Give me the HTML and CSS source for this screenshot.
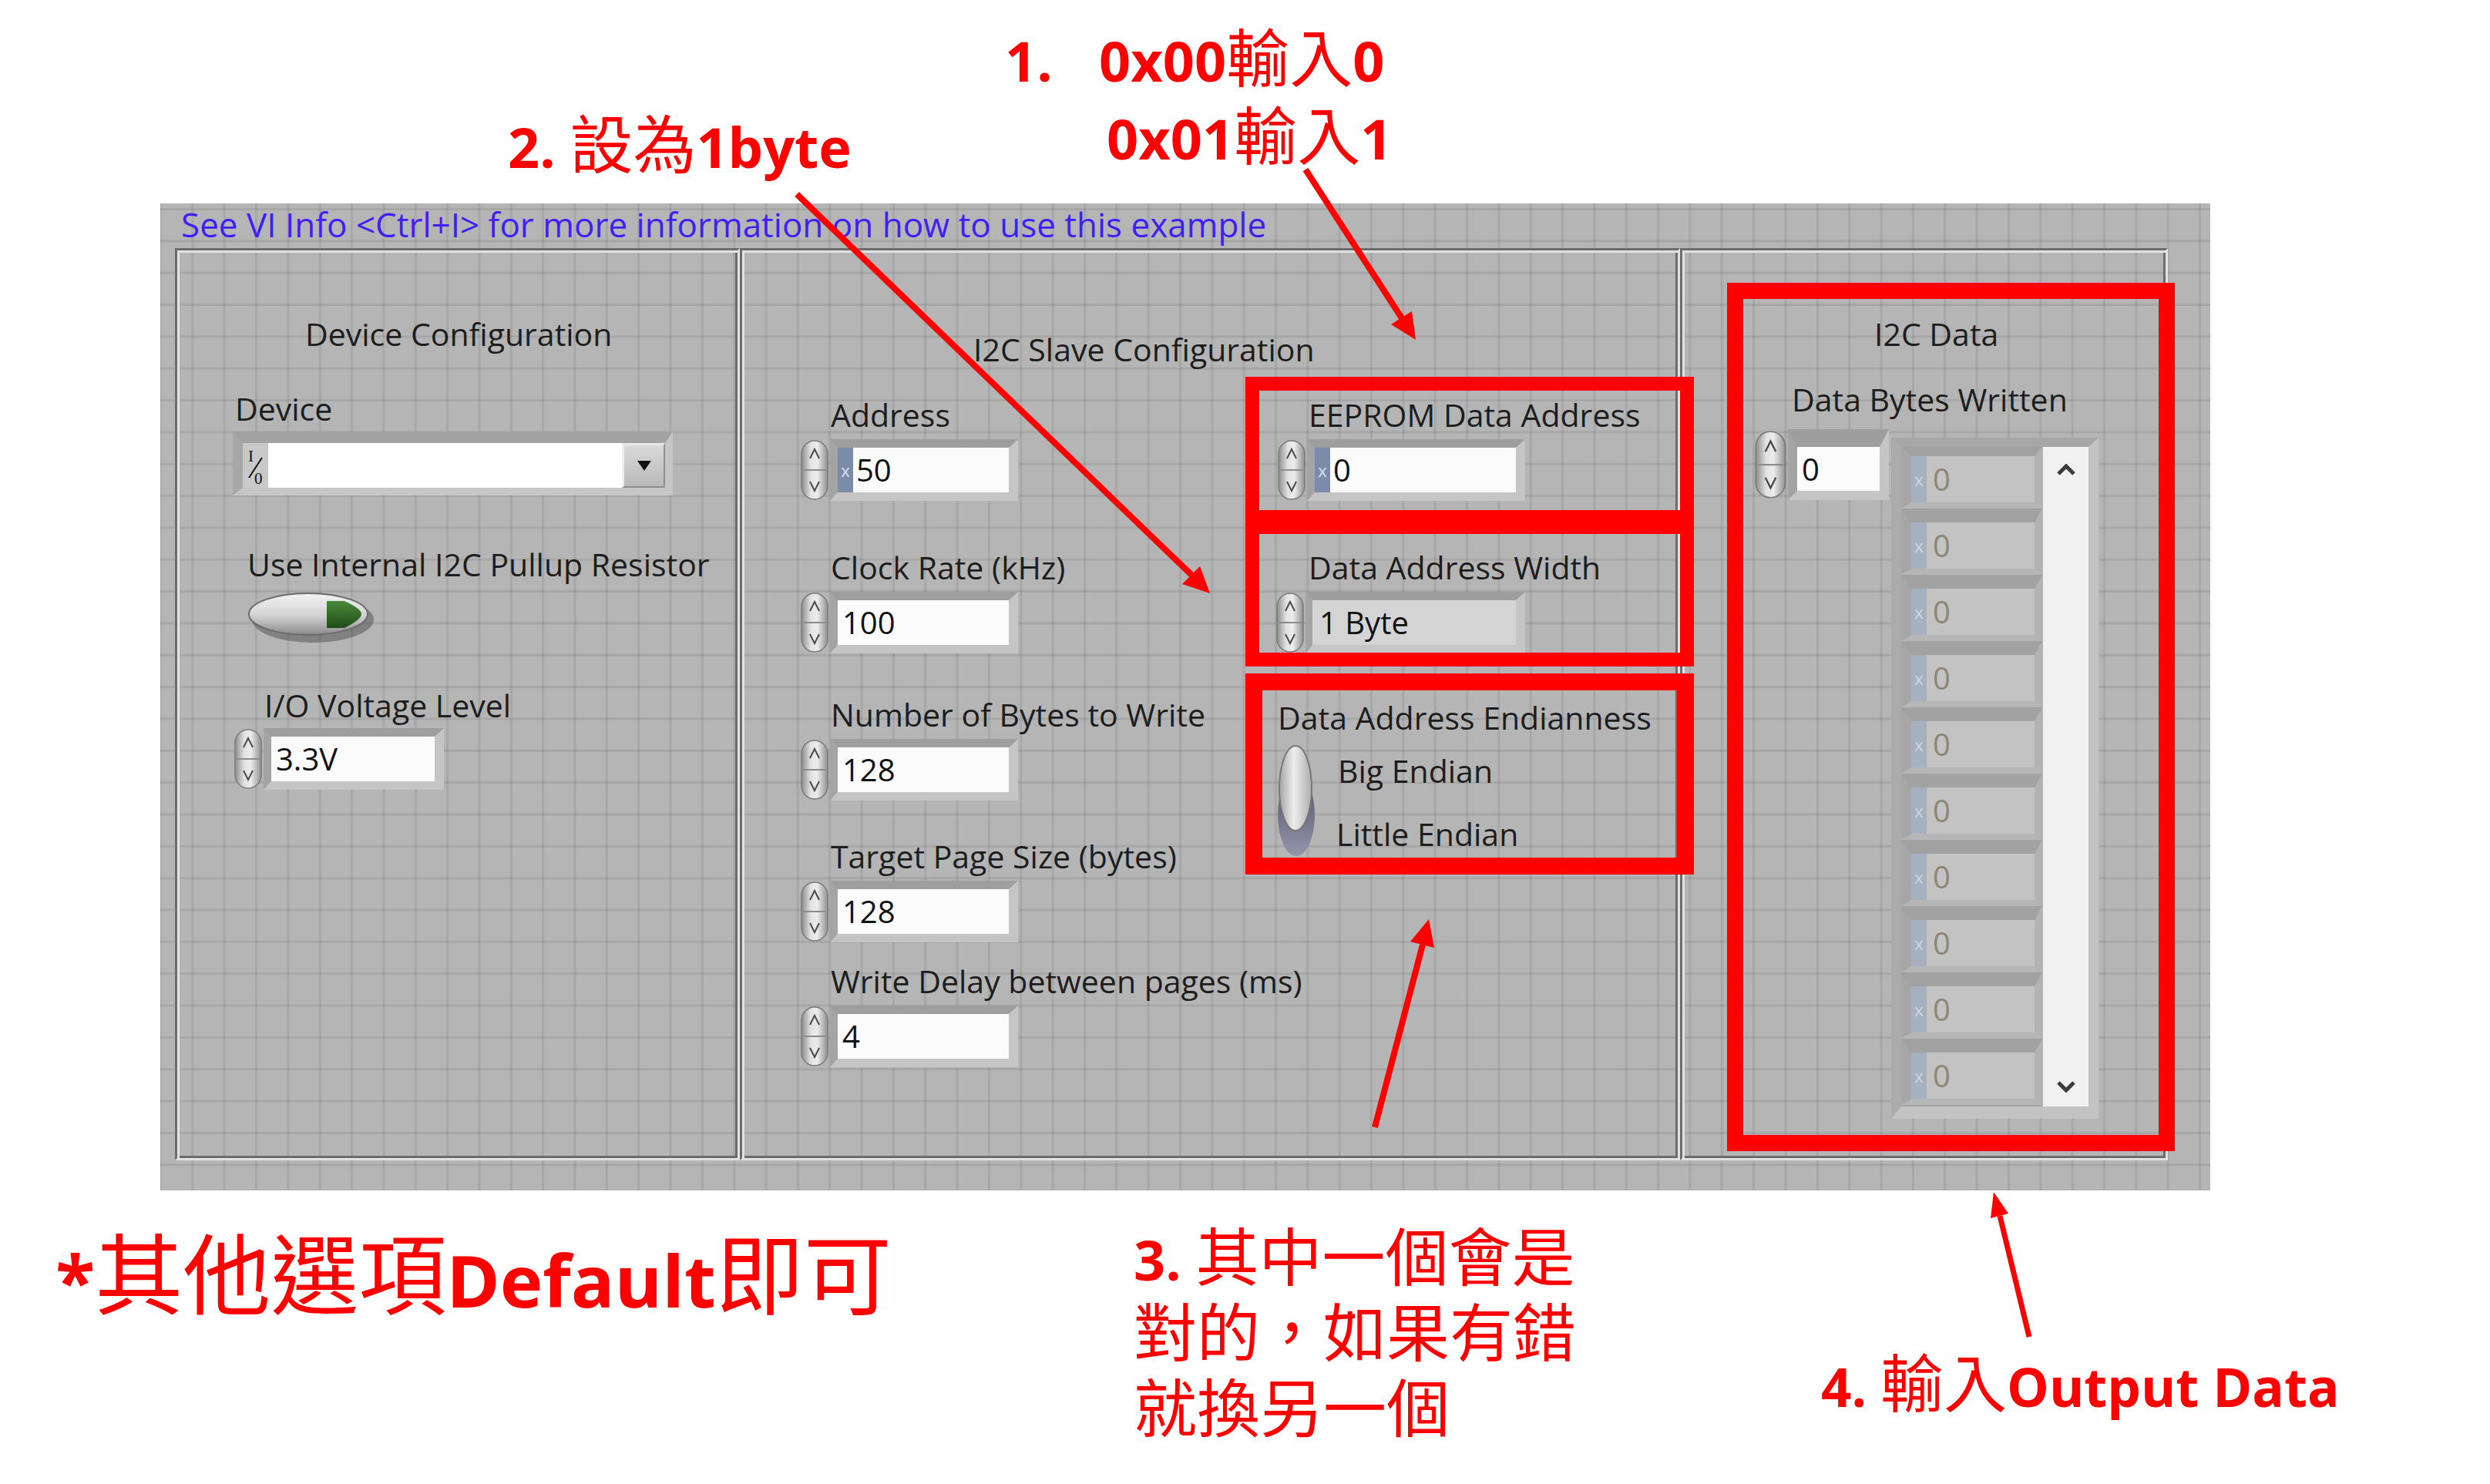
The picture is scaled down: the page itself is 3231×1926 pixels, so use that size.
FILE: index.html
```html
<!DOCTYPE html>
<html lang="zh-Hant">
<head>
<meta charset="utf-8">
<title>I2C EEPROM Write – 設定說明</title>
<link rel="stylesheet" href="styles.css">
</head>
<body>
<svg class="defs" width="0" height="0" aria-hidden="true">
  <defs>
    <linearGradient id="gSpin" x1="0" y1="0" x2="1" y2="0">
      <stop offset="0" stop-color="#8c8c8c"/>
      <stop offset=".35" stop-color="#e2e2e2"/>
      <stop offset=".6" stop-color="#ececec"/>
      <stop offset="1" stop-color="#909090"/>
    </linearGradient>
    <linearGradient id="gTog" x1="0" y1="0" x2="0" y2="1">
      <stop offset="0" stop-color="#f4f4f4"/>
      <stop offset=".55" stop-color="#d0d0d0"/>
      <stop offset="1" stop-color="#8a8a8a"/>
    </linearGradient>
    <linearGradient id="gVert" x1="0" y1="0" x2="1" y2="0">
      <stop offset="0" stop-color="#a4a4a4"/>
      <stop offset=".45" stop-color="#eeeeee"/>
      <stop offset="1" stop-color="#acacac"/>
    </linearGradient>
    <linearGradient id="gShade" x1="0" y1="0" x2="0" y2="1">
      <stop offset="0" stop-color="#4f4f66"/>
      <stop offset="1" stop-color="#9494aa"/>
    </linearGradient>
    <linearGradient id="gLed" x1="0" y1="0" x2="0" y2="1">
      <stop offset="0" stop-color="#4a8a3a"/>
      <stop offset="1" stop-color="#1f4d1a"/>
    </linearGradient>
    <symbol id="spin" viewBox="0 0 40 80">
      <rect x="3" y="2" width="34" height="76" rx="17" fill="url(#gSpin)" stroke="#7a7a7a" stroke-width="1.5"/>
      <line x1="5" y1="40" x2="35" y2="40" stroke="#8c8c8c" stroke-width="2"/>
      <path d="M14 25 L20 13 L26 25" fill="none" stroke="#4a4a4a" stroke-width="2"/>
      <path d="M14 55 L20 67 L26 55" fill="none" stroke="#4a4a4a" stroke-width="2"/>
    </symbol>
  </defs>
</svg>

<header class="top-notes">
  <p class="note note-2"><span class="lat">2. </span><span class="cjk">設為</span><span class="lat">1byte</span></p>
  <div class="note note-1">
    <p><span class="lat idx">1.</span><span class="lat">0x00</span><span class="cjk">輸入</span><span class="lat">0</span></p>
    <p class="n1-indent"><span class="lat">0x01</span><span class="cjk">輸入</span><span class="lat">1</span></p>
  </div>
</header>

<main class="fp">
  <p class="hint">See VI Info &lt;Ctrl+I&gt; for more information on how to use this example</p>
  <div class="panels">
    <section class="panel panel-dev">
      <h2 class="lbl dev-title">Device Configuration</h2>
      <div class="lbl dev-lbl">Device</div>
      <div class="ring">
        <svg class="io" viewBox="0 0 33 58" aria-hidden="true">
          <text x="7" y="24" font-family="Liberation Serif, serif" font-size="21" fill="#111">I</text>
          <line x1="25" y1="19" x2="8" y2="45" stroke="#111" stroke-width="2"/>
          <text x="15" y="53" font-family="Liberation Serif, serif" font-size="21" fill="#111">0</text>
        </svg>
        <div class="ring-field"></div>
        <div class="ring-btn"><span class="tri"></span></div>
      </div>
      <div class="lbl pull-lbl">Use Internal I2C Pullup Resistor</div>
      <svg class="toggle-h" viewBox="0 0 166 69" aria-hidden="true">
        <ellipse cx="86" cy="38" rx="79" ry="30" fill="#555" opacity=".55"/>
        <ellipse cx="80" cy="31" rx="77" ry="27" fill="url(#gTog)" stroke="#6a6a6a" stroke-width="2"/>
        <path d="M104 14 H127 Q149 24 149 31 Q149 38 127 49 H104 Z" fill="url(#gLed)"/>
      </svg>
      <div class="lbl io-lbl">I/O Voltage Level</div>
      <div class="num io-num">
        <svg class="spin"><use href="#spin"/></svg>
        <div class="frame"><div class="field w212">3.3V</div></div>
      </div>
    </section>

    <section class="panel panel-slave">
      <h2 class="lbl slave-title">I2C Slave Configuration</h2>
      <div class="slave-cols">
        <div class="col-a">
          <div class="lbl ca-lbl ca-1">Address</div>
          <div class="num ctl">
            <svg class="spin"><use href="#spin"/></svg>
            <div class="frame"><div class="radix">x</div><div class="field">50</div></div>
          </div>
          <div class="lbl ca-lbl ca-2">Clock Rate (kHz)</div>
          <div class="num ctl">
            <svg class="spin"><use href="#spin"/></svg>
            <div class="frame"><div class="field">100</div></div>
          </div>
          <div class="lbl ca-lbl ca-3">Number of Bytes to Write</div>
          <div class="num ctl">
            <svg class="spin"><use href="#spin"/></svg>
            <div class="frame"><div class="field">128</div></div>
          </div>
          <div class="lbl ca-lbl ca-4">Target Page Size (bytes)</div>
          <div class="num ctl">
            <svg class="spin"><use href="#spin"/></svg>
            <div class="frame"><div class="field">128</div></div>
          </div>
          <div class="lbl ca-lbl ca-5">Write Delay between pages (ms)</div>
          <div class="num ctl">
            <svg class="spin"><use href="#spin"/></svg>
            <div class="frame"><div class="field">4</div></div>
          </div>
        </div>
        <div class="col-b">
          <div class="lbl cb-1">EEPROM Data Address</div>
          <div class="num ctl cb-ctl">
            <svg class="spin"><use href="#spin"/></svg>
            <div class="frame"><div class="radix">x</div><div class="field w241">0</div></div>
          </div>
          <div class="lbl cb-2">Data Address Width</div>
          <div class="num ctl">
            <svg class="spin"><use href="#spin"/></svg>
            <div class="frame frame-enum"><div class="field enum-field">1 Byte</div></div>
          </div>
          <div class="lbl cb-3">Data Address Endianness</div>
          <div class="endian">
            <svg class="vtoggle" viewBox="0 0 51 146" aria-hidden="true">
              <ellipse cx="26" cy="92" rx="24" ry="53" fill="url(#gShade)"/>
              <ellipse cx="25" cy="57" rx="21" ry="55" fill="url(#gVert)" stroke="#777" stroke-width="2"/>
            </svg>
            <div class="endian-labels">
              <div class="lbl big-e">Big Endian</div>
              <div class="lbl little-e">Little Endian</div>
            </div>
          </div>
        </div>
      </div>
    </section>

    <section class="panel panel-data">
      <h2 class="lbl data-title">I2C Data</h2>
      <div class="lbl dbw-lbl">Data Bytes Written</div>
      <div class="arr-row">
        <div class="idx-ctl">
          <svg class="spin spin-lg" preserveAspectRatio="none"><use href="#spin"/></svg>
          <div class="frame idx-frame"><div class="field idx-field">0</div></div>
        </div>
        <div class="arr">
          <div class="arr-items">
            <div class="el"><div class="radix dim">x</div><div class="val">0</div></div>
            <div class="el"><div class="radix dim">x</div><div class="val">0</div></div>
            <div class="el"><div class="radix dim">x</div><div class="val">0</div></div>
            <div class="el"><div class="radix dim">x</div><div class="val">0</div></div>
            <div class="el"><div class="radix dim">x</div><div class="val">0</div></div>
            <div class="el"><div class="radix dim">x</div><div class="val">0</div></div>
            <div class="el"><div class="radix dim">x</div><div class="val">0</div></div>
            <div class="el"><div class="radix dim">x</div><div class="val">0</div></div>
            <div class="el"><div class="radix dim">x</div><div class="val">0</div></div>
            <div class="el"><div class="radix dim">x</div><div class="val">0</div></div>
          </div>
          <div class="scroll">
            <svg class="chev" viewBox="0 0 26 16" aria-hidden="true"><polyline points="3,13 13,3 23,13" fill="none" stroke="#3c3c3c" stroke-width="5"/></svg>
            <svg class="chev" viewBox="0 0 26 16" aria-hidden="true"><polyline points="3,3 13,13 23,3" fill="none" stroke="#3c3c3c" stroke-width="5"/></svg>
          </div>
        </div>
      </div>
    </section>
  </div>
</main>

<footer class="bottom-notes">
  <p class="note note-0"><span class="lat big-lat">*</span><span class="cjk big-cjk">其他選項</span><span class="lat big-lat">Default</span><span class="cjk big-cjk">即可</span></p>
  <div class="note note-3">
    <p><span class="lat">3. </span><span class="cjk">其中一個會是</span></p>
    <p><span class="cjk">對的，如果有錯</span></p>
    <p><span class="cjk">就換另一個</span></p>
  </div>
  <p class="note note-4"><span class="lat n4-lat">4. </span><span class="cjk">輸入</span><span class="lat n4-lat">Output Data</span></p>
</footer>

<svg class="marks" width="3231" height="1926" viewBox="0 0 3231 1926" aria-hidden="true">
  <g fill="none" stroke="#ff0000">
    <rect x="1625" y="498" width="564" height="173" stroke-width="18"/>
    <rect x="1625" y="684" width="564" height="172" stroke-width="18"/>
    <rect x="1627" y="885" width="560" height="239" stroke-width="22"/>
    <rect x="2251.5" y="377.5" width="560" height="1106" stroke-width="21"/>
  </g>
  <g stroke="#ff0000" stroke-width="8">
    <line x1="1694" y1="220" x2="1819" y2="413"/>
    <line x1="1034" y1="252" x2="1546" y2="746"/>
    <line x1="1784" y1="1463" x2="1846" y2="1226"/>
    <line x1="2633" y1="1735" x2="2595" y2="1578" stroke-width="7"/>
  </g>
  <g fill="#ff0000">
    <polygon points="1837,441 1805,421 1832,404"/>
    <polygon points="1570,770 1534,758 1557,735"/>
    <polygon points="1854,1193 1861,1230 1830,1222"/>
    <polygon points="2587,1547 2606,1575 2583,1581"/>
  </g>
</svg>
</body>
</html>
```

FILE: styles.css
```css
* { box-sizing: border-box; }
html, body { margin: 0; padding: 0; }
body {
  width: 3231px;
  height: 1926px;
  background: #ffffff;
  position: relative;
  overflow: hidden;
  font-family: "Open Sans", "Noto Sans", sans-serif;
}
p, h2 { margin: 0; }
.defs { position: absolute; width: 0; height: 0; overflow: hidden; }

/* ---------- red annotations ---------- */
.note {
  color: #ff0000;
  white-space: nowrap;
  font-family: "Open Sans", "Noto Sans", sans-serif;
  font-weight: 700;
  font-size: 72px;
}
.note span { line-height: 0; }
.lat { font-family: "Open Sans", "Noto Sans", sans-serif; font-weight: 700; font-size: 72px; }
.note .cjk {
  display: inline-block;
  height: 1em;
  line-height: 1em;
  font-family: "Noto Sans CJK TC", "Noto Sans CJK SC", sans-serif;
  font-weight: 400;
  font-size: 82px;
}

.top-notes {
  height: 264px;
  display: grid;
  grid-template-columns: 659px 645px 1fr;
  align-items: start;
}
.note-2 { grid-column: 2; margin-top: 140px; line-height: 100px; }
.note-1 { grid-column: 3; margin-top: 28px; line-height: 101px; }
.idx { display: inline-block; width: 122px; }
.n1-indent { padding-left: 132px; }

.bottom-notes {
  height: 381px;
  padding-left: 72px;
  display: grid;
  grid-template-columns: 1399px 892px 1fr;
  align-items: start;
}
.note-0 { margin-top: 46px; line-height: 130px; font-size: 94px; }
.big-lat { font-size: 94px; }
.note .big-cjk { font-size: 114px; }
.note-3 { margin-top: 40px; line-height: 98px; }
.note-4 { margin-top: 204px; line-height: 100px; font-size: 69px; }
.n4-lat { font-size: 69px; }

.marks { position: absolute; left: 0; top: 0; pointer-events: none; }

/* ---------- LabVIEW front panel ---------- */
.fp {
  margin-left: 208px;
  width: 2660px;
  height: 1281px;
  background-color: #b5b5b5;
  background-image:
    linear-gradient(to right, rgba(0,0,0,.08) 0 3px, transparent 3px),
    linear-gradient(to bottom, rgba(0,0,0,.08) 0 3px, transparent 3px);
  background-size: 41.35px 41.35px;
  background-position: -1px 6px;
}
.hint {
  height: 58px;
  padding-left: 27px;
  font: 400 44px/54px "Open Sans", "Noto Sans", sans-serif;
  color: #3f1ff5;
  white-space: nowrap;
}
.panels { display: flex; margin-left: 19px; height: 1184px; }
.panel {
  height: 100%;
  padding: 3px;
  border: 3px solid;
  border-color: #6c6c6c #e2e2e2 #e2e2e2 #6c6c6c;
  box-shadow: inset 3px 3px 0 #e2e2e2, inset -3px -3px 0 #6c6c6c;
  display: flex;
  flex-direction: column;
  align-items: flex-start;
}
.panel-dev { width: 733px; }
.panel-slave { width: 1220px; }
.panel-data { width: 633px; }

.lbl {
  font: 400 41px/48px "Open Sans", "Noto Sans", sans-serif;
  color: #1d1d1d;
  white-space: nowrap;
}

/* numeric controls */
.num { display: flex; align-items: center; }
.spin { width: 40px; height: 80px; flex: none; display: block; }
.frame {
  display: flex;
  border-style: solid;
  border-width: 11px 12px 11px 10px;
  border-color: #9e9e9e #c5c5c5 #c5c5c5 #a4a4a4;
}
.field {
  width: 222px;
  height: 58px;
  background: #fbfbfb;
  color: #111;
  font: 400 40px/58px "Open Sans", "Noto Sans", sans-serif;
  padding-left: 6px;
  white-space: nowrap;
}
.radix {
  width: 20px;
  height: 58px;
  background: #7b8cab;
  color: #dde3ee;
  font: 400 22px/58px "Open Sans", sans-serif;
  text-align: center;
  flex: none;
}
.radix + .field { width: 202px; padding-left: 4px; }
.radix + .w241 { width: 241px; }
.w212 { width: 212px; }
.enum-field { width: 264px; background: #d4d4d4; padding-left: 9px; }
.frame-enum { border-left-width: 9px; }

/* left panel */
.dev-title { margin: 81px 0 0 163px; font-weight: 400; }
.dev-lbl { margin: 49px 0 0 72px; }
.ring {
  display: flex;
  width: 571px;
  height: 83px;
  margin: 6px 0 0 69px;
  border-style: solid;
  border-width: 15px 10px 10px 13px;
  border-color: #a2a2a2 #c6c6c6 #c6c6c6 #a8a8a8;
}
.io { width: 33px; height: 58px; background: #c9c9c9; flex: none; }
.ring-field { width: 459px; height: 58px; background: #ffffff; }
.ring-btn {
  width: 56px;
  height: 58px;
  background: linear-gradient(#dadada, #b9b9b9);
  border-left: 3px solid #eeeeee;
  border-top: 3px solid #e6e6e6;
  border-bottom: 2px solid #8f8f8f;
  border-right: 2px solid #8f8f8f;
  display: flex;
  align-items: center;
  justify-content: center;
}
.tri {
  width: 0;
  height: 0;
  border-left: 9px solid transparent;
  border-right: 9px solid transparent;
  border-top: 13px solid #111;
}
.pull-lbl { margin: 65px 0 0 88px; }
.toggle-h { width: 166px; height: 69px; margin: 10px 0 0 87px; display: block; }
.io-lbl { margin: 56px 0 0 110px; }
.io-num { margin: 6px 0 0 69px; }

/* middle panel */
.slave-title { margin: 101px 0 0 297px; font-weight: 400; }
.slave-cols { display: flex; margin: 37px 0 0 71px; }
.col-a { width: 617px; display: flex; flex-direction: column; align-items: flex-start; }
.col-b { display: flex; flex-direction: column; align-items: flex-start; }
.ca-lbl { margin-left: 41px; }
.ca-2 { margin-top: 62px; }
.ca-3 { margin-top: 55px; }
.ca-4 { margin-top: 48px; }
.ca-5 { margin-top: 26px; }
.ctl { margin-top: 8px; }
.cb-1 { margin-left: 44px; }
.cb-ctl { margin-left: 2px; }
.cb-2 { margin: 62px 0 0 44px; }
.cb-3 { margin: 59px 0 0 4px; }
.endian { display: flex; margin: 11px 0 0 2px; }
.vtoggle { width: 51px; height: 146px; display: block; flex: none; }
.endian-labels { margin-left: 29px; display: flex; flex-direction: column; align-items: flex-start; }
.big-e { margin-top: 10px; }
.little-e { margin: 34px 0 0 -2px; }

/* right panel */
.data-title { margin: 81px 0 0 246px; font-weight: 400; }
.dbw-lbl { margin: 37px 0 0 139px; }
.arr-row { display: flex; align-items: flex-start; margin: 15px 0 0 89px; }
.idx-ctl { display: flex; align-items: flex-start; }
.spin-lg { width: 45px; height: 92px; }
.idx-frame { border-width: 23px 12px 12px 12px; }
.idx-field { width: 107px; height: 57px; line-height: 57px; }
.arr {
  display: flex;
  margin: 11px 0 0 3px;
  border-style: solid;
  border-width: 12px 13px 16px 13px;
  border-color: #a7a7a7 #c3c3c3 #c3c3c3 #ababab;
  background: #b6b6b6;
}
.arr-items { width: 183px; height: 856px; overflow: hidden; background: #a4a4a4; }
.el {
  display: flex;
  border-style: solid;
  border-width: 18px 10px 8px 13px;
  border-color: #a2a2a2 #b3b3b3 #b6b6b6 #a6a6a6;
}
.el:first-child { border-top-width: 12px; }
.radix.dim { height: 60px; line-height: 60px; background: #a7b0bf; color: #d3d7de; }
.val {
  width: 140px;
  height: 60px;
  background: #c3c3c3;
  color: #8e8676;
  font: 400 40px/60px "Open Sans", "Noto Sans", sans-serif;
  padding-left: 8px;
}
.scroll {
  width: 59px;
  height: 856px;
  margin-left: 1px;
  background: #f1f1f1;
  display: flex;
  flex-direction: column;
  justify-content: space-between;
  align-items: center;
  padding: 22px 0 18px;
}
.chev { width: 26px; height: 16px; display: block; }
```
